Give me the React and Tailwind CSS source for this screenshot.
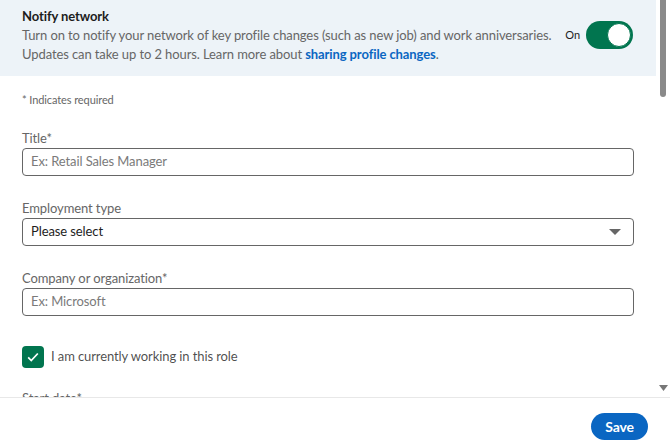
import React from 'react';

const font = { fontFamily: 'Lato, "Open Sans", sans-serif', letterSpacing: '-0.1px' };

const Field = ({ label, placeholder, select }) => (
  <div className="flex flex-col">
    <label className="text-[13px] leading-[20px] text-[#666666]">{label}</label>
    <div className="flex h-[28px] items-center justify-between rounded-[4px] border border-[#666666] px-[8px]">
      <span className={select ? 'text-[13px] text-[#1d1d1d]' : 'text-[13px] text-[#7a7a7a]'}>{placeholder}</span>
      {select && (
        <svg className="mr-[4px] h-[8px] w-[12px]" viewBox="0 0 12 8">
          <path d="M0 1h12L6 7z" fill="#666666" />
        </svg>
      )}
    </div>
  </div>
);

export default function App() {
  return (
    <div className="flex h-[448px] w-[670px] flex-col overflow-hidden bg-white" style={font}>
      <div className="flex min-h-0 flex-1">
        <div className="min-w-0 flex-1 overflow-hidden">
          {/* notify network band */}
          <div className="flex items-center justify-between bg-[#edf3f8] pl-[22px] pr-[23px] pt-[6px] pb-[12px]">
            <div className="whitespace-nowrap">
              <div className="text-[13px] leading-[20px] font-bold text-[#1d1d1d]">Notify network</div>
              <p className="text-[13px] leading-[19px] text-[#666666]">
                Turn on to notify your network of key profile changes (such as new job) and work anniversaries.
                <br />
                Updates can take up to 2 hours. Learn more about{' '}
                <a className="font-bold text-[#0a66c2]">sharing profile changes</a>.
              </p>
            </div>
            <div className="flex items-center gap-[6px]">
              <span className="text-[11px] text-[#1d1d1d]">On</span>
              <div className="flex h-[28px] w-[47px] items-center justify-end rounded-full bg-[#01754f] pr-[2px]">
                <div className="h-[24px] w-[24px] rounded-full border border-[#01754f] bg-white"></div>
              </div>
            </div>
          </div>

          <div className="flex flex-col px-[22px] pt-[16px]">
            <div className="text-[11px] leading-[16px] text-[#666666]">* Indicates required</div>
            <div className="mt-[20px] flex flex-col gap-[22px]">
              <Field label="Title*" placeholder="Ex: Retail Sales Manager" />
              <Field label="Employment type" placeholder="Please select" select />
              <Field label="Company or organization*" placeholder="Ex: Microsoft" />
            </div>
            <div className="mt-[30px] flex items-center gap-[7px]">
              <div className="flex h-[22px] w-[22px] items-center justify-center rounded-[4px] bg-[#01754f]">
                <svg className="h-[14px] w-[14px]" viewBox="0 0 16 16" fill="none" stroke="white" strokeWidth="2">
                  <path d="M2.5 8.5l3.5 3.5 7.5-8" />
                </svg>
              </div>
              <span className="text-[13px] text-[#1d1d1d]/80">I am currently working in this role</span>
            </div>
            <div className="mt-[20px] text-[13px] leading-[20px] text-[#666666]">Start date*</div>
          </div>
        </div>

        {/* scrollbar */}
        <div className="flex w-[14px] flex-col items-center justify-between bg-white pb-[6px]">
          <div className="h-[97px] w-[6px] rounded-b-full bg-[#8a8a8a]"></div>
          <svg className="h-[6px] w-[9px]" viewBox="0 0 9 6">
            <path d="M0 0h9L4.5 6z" fill="#777777" />
          </svg>
        </div>
      </div>

      <div className="flex h-[51px] shrink-0 items-start justify-end border-t border-[#e8e8e8] pr-[22px] pt-[15px]">
        <button className="h-[27px] rounded-full bg-[#0a66c2] px-[14px] text-[14px] font-bold text-white">Save</button>
      </div>
    </div>
  );
}
